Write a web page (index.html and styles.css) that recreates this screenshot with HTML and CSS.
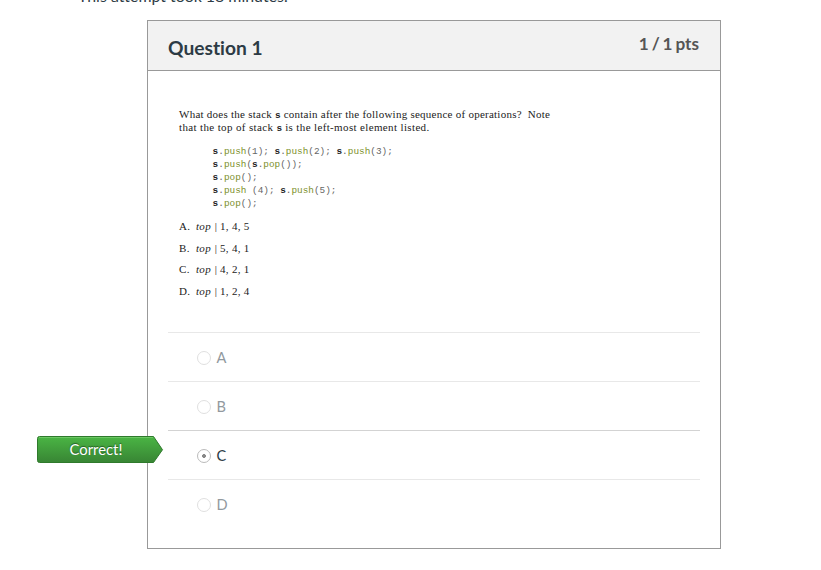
FILE: index.html
```html
<!DOCTYPE html>
<html lang="en">
<head>
<meta charset="utf-8">
<title>Quiz results</title>
<link rel="stylesheet" href="styles.css">
</head>
<body>
<p class="attempt">This attempt took 18 minutes.</p>
<section class="question">
  <header class="head">
    <h2 class="title">Question 1</h2>
    <span class="points">1 / 1 pts</span>
  </header>
  <div class="body">
    <div class="prompt">
      <p class="line line-a">What does the stack <b class="mono">s</b> contain after the following sequence of operations?&nbsp; Note</p>
      <p class="line line-b">that the top of stack <b class="mono">s</b> is the left-most element listed.</p>
<pre class="code"><b>s</b>.<i>push</i>(1); <b>s</b>.<i>push</i>(2); <b>s</b>.<i>push</i>(3);
<b>s</b>.<i>push</i>(<b>s</b>.<i>pop</i>());
<b>s</b>.<i>pop</i>();
<b>s</b>.<i>push</i> (4); <b>s</b>.<i>push</i>(5);
<b>s</b>.<i>pop</i>();</pre>
      <ul class="choices">
        <li><span class="letter">A.</span><em>top</em><span class="bar">|</span>1, 4, 5</li>
        <li><span class="letter">B.</span><em>top</em><span class="bar">|</span>5, 4, 1</li>
        <li><span class="letter">C.</span><em>top</em><span class="bar">|</span>4, 2, 1</li>
        <li><span class="letter">D.</span><em>top</em><span class="bar">|</span>1, 2, 4</li>
      </ul>
    </div>
    <div class="answers">
      <div class="answer"><span class="radio"></span><span>A</span></div>
      <div class="answer"><span class="radio"></span><span>B</span></div>
      <div class="answer selected">
        <svg class="arrow" width="127" height="28" viewBox="0 0 127 28">
          <defs><linearGradient id="g" x1="0" y1="0" x2="0" y2="1"><stop offset="0" stop-color="#4ab544"/><stop offset="1" stop-color="#388534"/></linearGradient></defs>
          <path d="M2.5.5H116.500L125.500 13.750 116.500 26.500H2.500Q.5 26.500.5 24.500V2.500Q.5.5 2.500.5Z" fill="url(#g)" stroke="#2f7a2c"/>
          <path d="M2 1.500H116" stroke="#6cc763" fill="none"/>
        </svg>
        <span class="arrow-text">Correct!</span>
        <span class="radio on"></span><span>C</span>
      </div>
      <div class="answer"><span class="radio"></span><span>D</span></div>
    </div>
  </div>
</section>
</body>
</html>
```
FILE: styles.css
```css
* { box-sizing: border-box; }
html, body { margin: 0; height: 570px; overflow: hidden; }
body { background: #fff; color: #2d3b45; font-family: Lato, sans-serif; font-variant-ligatures: none; }
p, h2, pre, ul { margin: 0; padding: 0; }
.attempt { height: 20px; margin: -15px 0 15px 78px; font-size: 15.9px; line-height: 22px; }
.question { width: 574px; height: 529px; margin-left: 147px; border: 1px solid #999; }
.head { display: flex; justify-content: space-between; height: 50px; padding: 0 21px 0 20px; background: #f2f2f2; border-bottom: 1px solid #999; }
.title { font-size: 19.2px; line-height: 54px; font-weight: 700; }
.points { font-size: 17.2px; line-height: 46px; font-weight: 700; color: #555; word-spacing: -1.3px; }
.body { padding: 37px 20px 0; }
.prompt { height: 224px; padding-left: 11px; color: #222; font-family: "Liberation Serif", serif; font-size: 11px; line-height: 13px; }
.line { white-space: nowrap; }
.line-a { letter-spacing: .25px; }
.line-b { letter-spacing: .36px; }
.mono, .code { font-family: "Liberation Mono", monospace; font-size: 9.4px; letter-spacing: 0; }
.mono { line-height: 1; }
.code { margin: 11px 0 0 33.6px; line-height: 13px; color: #666; }
.code b { color: #222; }
.code i { font-style: normal; color: #7b8f2a; }
.choices { list-style: none; margin-top: 6px; }
.choices li { display: flex; height: 21.5px; line-height: 21px; letter-spacing: .3px; }
.letter { width: 17px; }
.choices em { width: 16px; }
.bar { width: 8px; text-align: center; }
.answers { width: 532px; }
.answer { position: relative; display: flex; align-items: center; height: 49px; padding: 1px 0 0 29px; border-top: 1px solid #e8e8e8; color: #92999e; font-size: 14.6px; }
.selected { border-color: #d3d3d3; color: #2d3b45; }
.radio { width: 14px; height: 14px; margin-right: 5.5px; border: 1px solid #e0e0e0; border-radius: 50%; }
.radio.on { border-color: #bbb; background: radial-gradient(circle, #888 1.6px, #fff 2.2px); }
.arrow { position: absolute; left: -131px; top: 5px; }
.arrow-text { position: absolute; left: -131px; top: 5px; width: 118px; color: #fff; font-size: 14.8px; line-height: 27px; text-align: center; text-shadow: 0 -1px 1px #245c22; }
```
